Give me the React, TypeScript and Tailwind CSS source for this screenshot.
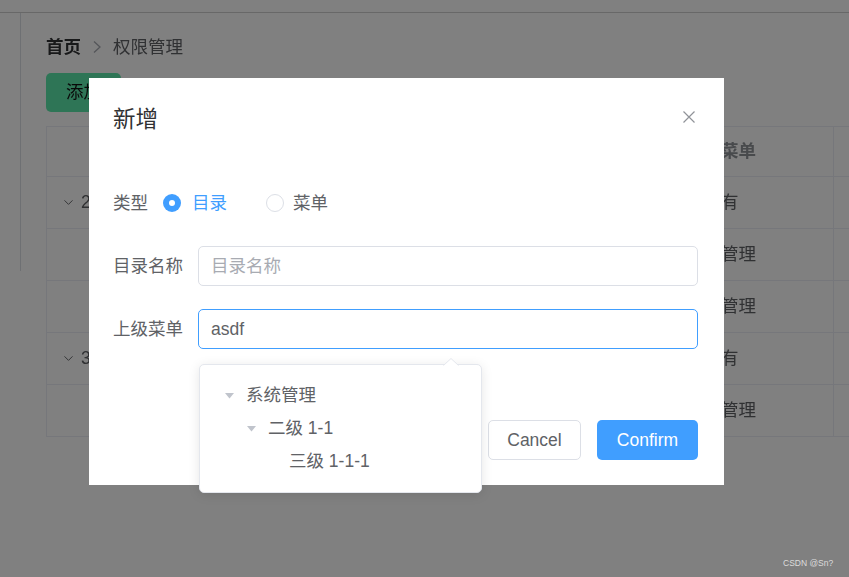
import { ChevronDown } from "lucide-react"

const font = "font-['Liberation_Sans','Noto_Sans_CJK_SC',sans-serif]"

const rows = [
  { expand: true, first: "2", last: "都没有" },
  { expand: false, first: "", last: "系统管理" },
  { expand: false, first: "", last: "系统管理" },
  { expand: true, first: "3", last: "都没有" },
  { expand: false, first: "", last: "系统管理" },
]

const treeNodes = [
  { label: "系统管理", level: 0, caret: true },
  { label: "二级 1-1", level: 1, caret: true },
  { label: "三级 1-1-1", level: 2, caret: false },
]

function Caret() {
  return (
    <svg width="9" height="6" viewBox="0 0 9 6">
      <path d="M0 0 L9 0 L4.5 5.5 Z" fill="#c0c4cc" />
    </svg>
  )
}

export default function App() {
  return (
    <div className={`relative w-[849px] h-[577px] overflow-hidden bg-[#808080] ${font}`}>
      {/* page behind the dialog, dimmed */}
      <div className="h-[577px] bg-white brightness-50">
        <div className="h-[13px] border-b border-[#cfcfcf]" />
        <div className="flex">
          <div className="w-[21px] h-[258px] shrink-0 border-r border-[#dcdfe6]" />
          <div className="flex-1 pl-[25px] overflow-hidden">
            <div className="flex items-center h-[24px] mt-[22px] text-[17.5px]">
              <span className="font-bold text-[#303133]">首页</span>
              <svg className="mx-[11px]" width="10" height="14" viewBox="0 0 10 14">
                <path d="M2 1.5 L8 7 L2 12.5" fill="none" stroke="#a8abb2" strokeWidth="1.3" />
              </svg>
              <span className="text-[#606266]">权限管理</span>
            </div>
            <button className="mt-[14px] h-[39px] px-[20px] rounded-[5px] bg-[#5de9ab] text-[17.5px] text-[#111]">添加</button>
            <div className="mt-[14px] w-[900px] border-l border-t border-[#ebeef5] text-[17.5px]">
              <div className="flex h-[50px] border-b border-[#ebeef5] font-bold text-[#909399]">
                <div className="w-[624px]" />
                <div className="w-[163px] pl-[15px] flex items-center border-r border-[#ebeef5]">上级菜单</div>
                <div className="flex-1" />
              </div>
              {rows.map((r, i) => (
                <div key={i} className="flex h-[52px] border-b border-[#ebeef5] text-[#606266]">
                  <div className="w-[624px] pl-[14px] flex items-center gap-[5px]">
                    {r.expand ? <ChevronDown size={15} strokeWidth={1.5} className="text-[#606266]" /> : null}
                    <span>{r.first}</span>
                  </div>
                  <div className="w-[163px] pl-[15px] flex items-center border-r border-[#ebeef5]">{r.last}</div>
                  <div className="flex-1" />
                </div>
              ))}
            </div>
          </div>
        </div>
      </div>

      {/* dialog */}
      <div className="absolute left-[89px] top-[78px] w-[635px] h-[407px] bg-white pl-[24px] pr-[26px] pt-[27px] pb-[25px] flex flex-col">
        <div className="h-[30px] flex items-center text-[22.5px] text-[#303133] leading-none">新增</div>
        <svg className="absolute top-[33px] right-[29px]" width="12" height="12" viewBox="0 0 12 12">
          <path d="M0.5 0.5 L11.5 11.5 M11.5 0.5 L0.5 11.5" stroke="#909399" strokeWidth="1.2" />
        </svg>

        <div className="mt-[48px] flex flex-col gap-[23px] text-[17.5px]">
          <div className="flex items-center h-[40px]">
            <span className="pr-[15px] text-[#606266]">类型</span>
            <div className="flex items-center">
              <span className="w-[18px] h-[18px] rounded-full bg-[#409eff] flex items-center justify-center">
                <span className="w-[6px] h-[6px] rounded-full bg-white" />
              </span>
              <span className="ml-[11px] text-[#409eff]">目录</span>
            </div>
            <div className="flex items-center ml-[39px]">
              <span className="w-[18px] h-[18px] rounded-full border border-[#dcdfe6] bg-white" />
              <span className="ml-[9px] text-[#606266]">菜单</span>
            </div>
          </div>
          <div className="flex items-center h-[40px]">
            <span className="pr-[15px] text-[#606266]">目录名称</span>
            <div className="flex-1 h-[40px] rounded-[5px] border border-[#dcdfe6] pl-[12px] flex items-center text-[#a8abb2]">目录名称</div>
          </div>
          <div className="flex items-center h-[40px]">
            <span className="pr-[15px] text-[#606266]">上级菜单</span>
            <div className="flex-1 h-[40px] rounded-[5px] border border-[#409eff] pl-[12px] flex items-center text-[#606266]">asdf</div>
          </div>
        </div>

        <div className="mt-auto flex justify-end gap-[16px] text-[17.5px]">
          <button className="h-[40px] w-[93px] rounded-[5px] border border-[#dcdfe6] bg-white text-[#606266]">Cancel</button>
          <button className="h-[40px] w-[101px] rounded-[5px] bg-[#409eff] text-white">Confirm</button>
        </div>
      </div>

      {/* tree select dropdown */}
      <div className="absolute left-[199px] top-[364px] w-[283px] h-[129px] bg-white rounded-[5px] border border-[#e4e7ed] shadow-[0_2px_12px_0_rgba(0,0,0,0.1)] pt-[14px] text-[17.5px] text-[#606266]">
        <svg className="absolute -top-[7px] left-[243px]" width="16" height="8" viewBox="0 0 16 8">
          <path d="M0 8 L8 0.5 L16 8 Z" fill="white" />
          <path d="M0.5 7.5 L8 0.5 L15.5 7.5" fill="none" stroke="#e4e7ed" strokeWidth="1" />
        </svg>
        {treeNodes.map((n) => (
          <div
            key={n.label}
            className={`flex items-center h-[33px] ${n.level === 0 ? "pl-[21px]" : n.level === 1 ? "pl-[43px]" : "pl-[64px]"}`}
          >
            <span className="w-[16px] flex justify-center">{n.caret ? <Caret /> : null}</span>
            <span className="ml-[9px]">{n.label}</span>
          </div>
        ))}
      </div>

      <div className="absolute left-[783px] top-[557px] text-[8.5px] text-[#dcdcdc]">CSDN @Sn?</div>
    </div>
  )
}
